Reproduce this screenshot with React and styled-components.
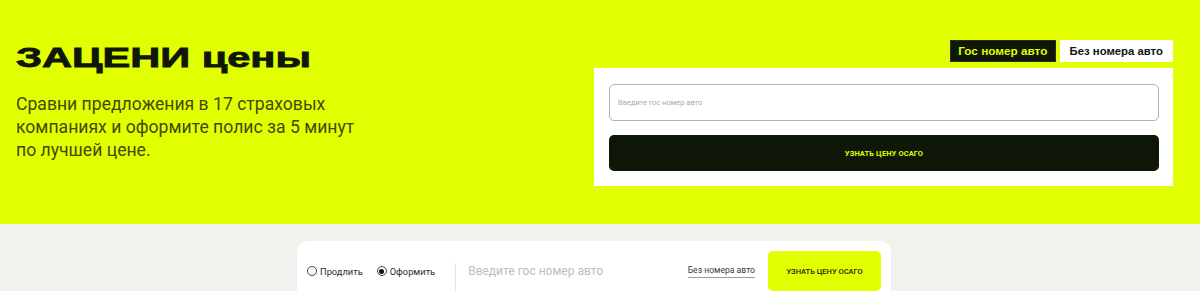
import React from 'react';
import styled, { createGlobalStyle } from 'styled-components';

const GlobalStyle = createGlobalStyle`
  html, body {
    margin: 0;
    padding: 0;
    background: #f2f1ed;
    font-family: Roboto, "Liberation Sans", sans-serif;
  }
  * { box-sizing: border-box; }
`;

const YELLOW = '#e1ff00';
const DARK = '#0f1808';

const Hero = styled.section`
  height: 224px;
  background: ${YELLOW};
  display: flex;
  justify-content: space-between;
  padding: 40px 27px 0 16px;
`;

const Intro = styled.div`
  display: flex;
  flex-direction: column;
`;

const Title = styled.h1`
  margin: 0;
  height: 37px;
  font-family: "Liberation Sans", Arial, sans-serif;
  font-weight: 900;
  font-size: 27px;
  line-height: 37px;
  color: ${DARK};
  white-space: nowrap;
  span {
    display: inline-block;
    transform: scaleX(1.54);
    transform-origin: left center;
    -webkit-text-stroke: 0.8px ${DARK};
  }
`;

const Lead = styled.p`
  margin: 16px 0 0;
  width: 345px;
  font-size: 17.6px;
  line-height: 23px;
  color: #414a06;
  font-weight: 400;
`;

const Calc = styled.div`
  width: 579px;
  display: flex;
  flex-direction: column;
  align-items: flex-end;
`;

const Tabs = styled.div`
  display: flex;
  gap: 4px;
`;

const Tab = styled.button`
  width: ${(p) => p.$w}px;
  height: 22px;
  padding: 0;
  border: 1px solid ${(p) => (p.$active ? '#2a2f1a' : '#fff')};
  background: ${(p) => (p.$active ? DARK : '#fff')};
  color: ${(p) => (p.$active ? YELLOW : '#111')};
  font-family: "Liberation Sans", Arial, sans-serif;
  font-weight: 700;
  font-size: 10.5px;
  display: flex;
  align-items: center;
  justify-content: center;
  cursor: pointer;
  span {
    display: inline-block;
    transform: scaleX(${(p) => p.$sx});
    white-space: nowrap;
  }
`;

const Panel = styled.div`
  margin-top: 6px;
  width: 100%;
  background: #fff;
  padding: 16px 14px 15px 15px;
  display: flex;
  flex-direction: column;
  gap: 14px;
`;

const PlateInput = styled.input`
  height: 37px;
  width: 100%;
  border: 1px solid #b4b3a6;
  border-radius: 5px;
  padding: 0 8px;
  font-family: Roboto, sans-serif;
  font-size: 7.5px;
  color: #333;
  outline: none;
  &::placeholder { color: #a9a9a9; }
`;

const DarkButton = styled.button`
  height: 36px;
  width: 100%;
  border: none;
  border-radius: 5px;
  background: ${DARK};
  color: ${YELLOW};
  font-family: Roboto, sans-serif;
  font-weight: 700;
  font-size: 7.5px;
  letter-spacing: 0.1px;
  cursor: pointer;
`;

const Strip = styled.section`
  height: 67px;
  padding: 17px 0 0 297px;
  overflow: hidden;
`;

const Bar = styled.div`
  width: 594px;
  height: 70px;
  background: #fff;
  border-radius: 11px;
  padding: 10px 10px 0 10px;
  display: flex;
  align-items: flex-start;
`;

const Row = styled.div`
  height: 40px;
  flex: 1;
  display: flex;
  align-items: center;
`;

const Radio = styled.label`
  display: flex;
  align-items: center;
  gap: 3px;
  margin-right: ${(p) => p.$mr}px;
  font-size: 9.3px;
  color: #2b2b2b;
  cursor: pointer;
`;

const Dot = styled.span`
  width: 10px;
  height: 10px;
  border-radius: 50%;
  border: 1px solid #444;
  display: flex;
  align-items: center;
  justify-content: center;
  &::after {
    content: '';
    width: 5px;
    height: 5px;
    border-radius: 50%;
    background: #111;
    display: ${(p) => (p.$on ? 'block' : 'none')};
  }
`;

const Divider = styled.span`
  width: 1px;
  height: 40px;
  margin-top: 12px;
  background: #e6e6e2;
  margin-right: 12px;
  align-self: flex-start;
`;

const PlainInput = styled.input`
  flex: 1;
  border: none;
  outline: none;
  font-family: Roboto, sans-serif;
  font-size: 12px;
  color: #333;
  padding: 0;
  &::placeholder { color: #bdbdbd; }
`;

const NoPlate = styled.a`
  font-size: 8.6px;
  color: #3a3a3a;
  padding-bottom: 2px;
  border-bottom: 1px solid #9a9a9a;
  margin-right: 13px;
  cursor: pointer;
  white-space: nowrap;
`;

const YellowButton = styled.button`
  width: 113px;
  height: 40px;
  border: none;
  border-radius: 5px;
  background: ${YELLOW};
  color: #1b2408;
  font-family: Roboto, sans-serif;
  font-weight: 500;
  font-size: 7.5px;
  cursor: pointer;
`;

export default function App() {
  return (
    <>
      <GlobalStyle />
      <Hero>
        <Intro>
          <Title><span>ЗАЦЕНИ цены</span></Title>
          <Lead>
            Сравни предложения в 17 страховых компаниях и оформите полис за 5 минут по лучшей цене.
          </Lead>
        </Intro>
        <Calc>
          <Tabs>
            <Tab $active $w={106} $sx={1.12}><span>Гос номер авто</span></Tab>
            <Tab $w={113} $sx={1.08}><span>Без номера авто</span></Tab>
          </Tabs>
          <Panel>
            <PlateInput placeholder="Введите гос номер авто" />
            <DarkButton>УЗНАТЬ ЦЕНУ ОСАГО</DarkButton>
          </Panel>
        </Calc>
      </Hero>
      <Strip>
        <Bar>
          <Row>
            <Radio $mr={14}><Dot />Продлить</Radio>
            <Radio $mr={20}><Dot $on />Оформить</Radio>
            <Divider />
            <PlainInput placeholder="Введите гос номер авто" />
            <NoPlate>Без номера авто</NoPlate>
          </Row>
          <YellowButton>УЗНАТЬ ЦЕНУ ОСАГО</YellowButton>
        </Bar>
      </Strip>
    </>
  );
}
